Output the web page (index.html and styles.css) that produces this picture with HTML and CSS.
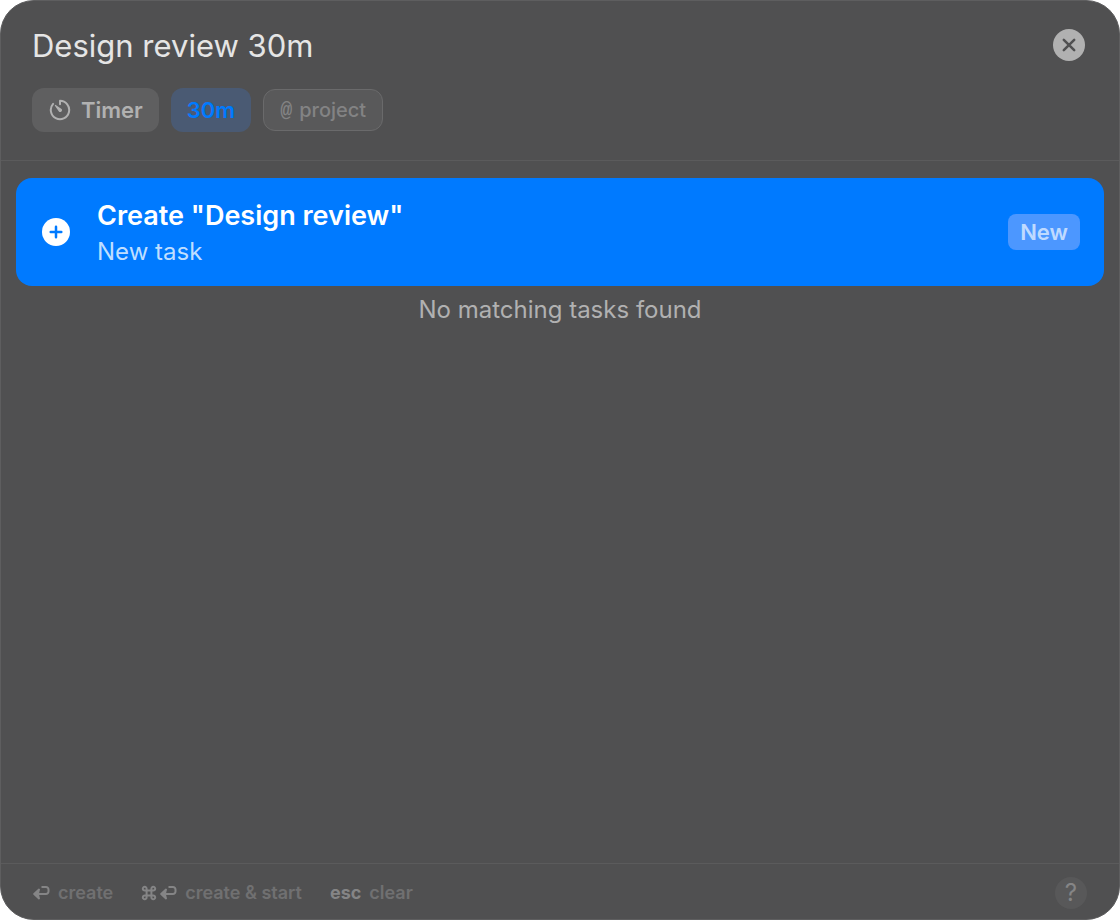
FILE: index.html
```html
<!DOCTYPE html>
<html lang="en">
<head>
<meta charset="utf-8">
<meta name="viewport" content="width=device-width, initial-scale=1">
<title>Quick task</title>
<link rel="stylesheet" href="styles.css">
</head>
<body>
<main class="panel">
  <header class="header">
    <div class="search">
      <input class="search-input" type="text" value="Design review 30m" aria-label="Task">
      <button class="clear" type="button" aria-label="Clear">
        <svg width="32" height="32" viewBox="0 0 32 32"><circle cx="16" cy="16" r="16" fill="#b1b1b1"/><path d="M10.8 10.8l10.4 10.4M21.2 10.8L10.8 21.2" stroke="#505051" stroke-width="2.5" stroke-linecap="round"/></svg>
      </button>
    </div>
    <div class="chips">
      <button class="chip chip-timer" type="button">
        <svg width="22" height="22" viewBox="0 0 22 22" fill="none" stroke="currentColor" stroke-width="2" stroke-linecap="round" stroke-linejoin="round"><path d="M11 5.2V1.8A9.2 9.2 0 1 1 4.1 4.9"/><path d="M6.4 6.4l5.8 4a1.3 1.3 0 0 1-1.8 1.8z" fill="currentColor" stroke-width="1.2"/></svg>
        <span>Timer</span>
      </button>
      <button class="chip chip-duration" type="button">30m</button>
      <button class="chip chip-project" type="button"><span class="at">@</span><span>project</span></button>
    </div>
  </header>
  <section class="results">
    <button class="result" type="button">
      <svg class="result-icon" width="28" height="28" viewBox="0 0 28 28"><circle cx="14" cy="14" r="14" fill="#fff"/><path d="M14 8.7v10.6M8.7 14h10.6" stroke="#007aff" stroke-width="2.5" stroke-linecap="round"/></svg>
      <span class="result-text">
        <span class="result-title">Create "Design review"</span>
        <span class="result-sub">New task</span>
      </span>
      <span class="badge">New</span>
    </button>
    <p class="empty">No matching tasks found</p>
  </section>
  <footer class="footer">
    <span class="hint">
      <svg class="key" width="17" height="16" viewBox="0 0 17 16"><path d="M8.5 2H13a2.5 2.5 0 0 1 2.5 2.5v2A2.5 2.5 0 0 1 13 9H2"/><path class="key-head" d="M6 4.6L1.2 9 6 13.4l-1.2-4.4z"/></svg>
      <span>create</span>
    </span>
    <span class="hint">
      <span class="keys">
        <svg class="key" width="16" height="16" viewBox="0 0 16 16"><path d="M5.6 5.6H3.8a1.9 1.9 0 1 1 1.8-1.8v8.4a1.9 1.9 0 1 1-1.8-1.8h8.4a1.9 1.9 0 1 1-1.8 1.8V3.8a1.9 1.9 0 1 1 1.8 1.8z"/></svg>
        <svg class="key" width="17" height="16" viewBox="0 0 17 16"><path d="M8.5 2H13a2.5 2.5 0 0 1 2.5 2.5v2A2.5 2.5 0 0 1 13 9H2"/><path class="key-head" d="M6 4.6L1.2 9 6 13.4l-1.2-4.4z"/></svg>
      </span>
      <span>create &amp; start</span>
    </span>
    <span class="hint"><kbd class="esc">esc</kbd><span>clear</span></span>
    <button class="help" type="button" aria-label="Help">?</button>
  </footer>
</main>
</body>
</html>
```
FILE: styles.css
```css
* { box-sizing: border-box; }
body { margin: 0; background: #fff; font-family: Inter, "Liberation Sans", sans-serif; }
button, input { font: inherit; color: inherit; border: 0; background: none; padding: 0; margin: 0; }
svg { display: block; flex: none; }

.panel {
  display: flex;
  flex-direction: column;
  min-height: 100vh;
  background: #505051;
  border: 1px solid #5e5e5f;
  border-radius: 34px;
}

.header { padding: 24px 34px 28px 31px; border-bottom: 1px solid #5b5b5c; }
.search { display: flex; align-items: center; gap: 16px; }
.search-input {
  flex: 1;
  min-width: 0;
  height: 40px;
  font-size: 31px;
  color: #e5e5e5;
  outline: none;
}

.chips { display: flex; align-items: center; gap: 12px; margin-top: 23px; }
.chip {
  display: flex;
  align-items: center;
  height: 44px;
  border-radius: 12px;
  font-size: 22px;
  font-weight: 600;
}
.chip-timer { gap: 10px; padding: 0 16px 0 17px; background: #5f5f60; color: #b1b1b1; }
.chip-duration { padding: 0 16px; background: #4a5a73; color: #007aff; }
.chip-project {
  gap: 7px;
  height: 42px;
  padding: 0 16px;
  border: 1px solid #6a6a6b;
  background: #59595a;
  color: #838384;
  font-size: 20px;
  font-weight: 500;
}
.at { font-family: "Liberation Mono", monospace; font-weight: 700; }

.results { flex: 1; padding: 17px 15px; }
.result {
  display: flex;
  align-items: center;
  width: 100%;
  padding: 18px 24px 18px 26px;
  border-radius: 16px;
  background: #007aff;
  text-align: left;
}
.result-text { display: flex; flex: 1; flex-direction: column; padding-left: 27px; }
.result-title { font-size: 27px; line-height: 40px; font-weight: 600; color: #fff; }
.result-sub { font-size: 24px; line-height: 32px; color: #bfdeff; }
.badge {
  padding: 0 12px;
  border-radius: 8px;
  background: #4c97ff;
  color: #bfdaff;
  font-size: 22px;
  line-height: 36px;
  font-weight: 600;
}
.empty { margin: 8px 0 0; font-size: 24px; line-height: 32px; color: #b1b1b1; text-align: center; }

.footer {
  display: flex;
  align-items: center;
  gap: 28px;
  height: 56px;
  padding: 2px 32px 0;
  border-top: 1px solid #5b5b5c;
  color: #707071;
  font-size: 18px;
  font-weight: 600;
}
.hint { display: flex; align-items: center; gap: 8px; }
.keys { display: flex; gap: 3px; }
.key { fill: none; stroke: #858586; stroke-width: 2; stroke-linejoin: round; }
.key-head { fill: #858586; }
.esc { font: inherit; font-weight: 700; color: #858586; }
.help {
  width: 32px;
  height: 32px;
  margin-left: auto;
  border-radius: 50%;
  background: #585859;
  color: #858586;
  font-size: 24px;
  font-weight: 400;
  line-height: 32px;
}
```
